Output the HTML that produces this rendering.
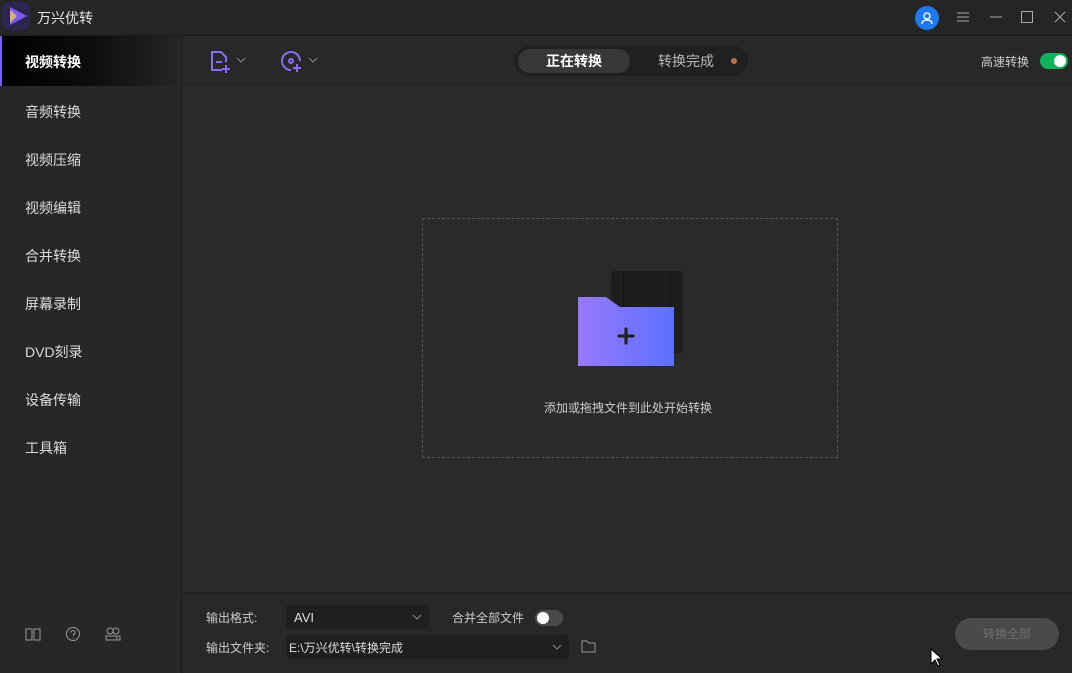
<!DOCTYPE html>
<html><head><meta charset="utf-8"><style>
*{margin:0;padding:0;box-sizing:border-box}
body{width:1072px;height:673px;background:#2a2a2a;font-family:"Liberation Sans","Noto Sans CJK SC",sans-serif;color:#ddd;position:relative;overflow:hidden;font-size:13px}
.abs{position:absolute}
#title{left:0;top:0;width:1072px;height:36px;background:#252525;border-bottom:1px solid #1c1c1c}
#side{left:0;top:36px;width:182px;height:637px;background:#272727;border-right:1px solid #1e1e1e}
.item{position:absolute;left:25px;font-size:14px;color:#dcdcdc}
#tool{left:182px;top:36px;width:890px;height:49px;border-bottom:1px solid #202020;background:#282828}
#bottom{left:182px;top:592px;width:890px;height:81px;border-top:1px solid #202020;background:#282828}
</style></head><body>
<div id="title" class="abs">
 <div class="abs" style="left:2px;top:2px;width:28px;height:28px;border-radius:6px;background:#2d2450"></div>
 <svg class="abs" style="left:8px;top:6px" width="20" height="20"><polygon points="2,1 19,10 2,19" fill="#7d5cf5"/><polygon points="2,4 9,10 2,17" fill="#d8b37a"/></svg>
 <div class="abs" style="left:37px;top:8px;font-size:14px;color:#e6e6e6">万兴优转</div>
 <div class="abs" style="left:915px;top:6px;width:24px;height:24px;border-radius:50%;background:#1f7af2"></div>
 <svg class="abs" style="left:915px;top:6px" width="24" height="24"><circle cx="12" cy="10" r="3" fill="none" stroke="#fff" stroke-width="1.3"/><path d="M7 18c0-3 2-4 5-4s5 1 5 4" fill="none" stroke="#fff" stroke-width="1.3"/></svg>
 <svg class="abs" style="left:956px;top:10px" width="14" height="14" stroke="#aaa"><path d="M1 3h12M1 7h12M1 11h12"/></svg>
 <svg class="abs" style="left:989px;top:10px" width="14" height="14" stroke="#aaa"><path d="M1 7h12"/></svg>
 <svg class="abs" style="left:1020px;top:10px" width="14" height="14" stroke="#aaa" fill="none"><rect x="1.5" y="1.5" width="11" height="11"/></svg>
 <svg class="abs" style="left:1053px;top:10px" width="14" height="14" stroke="#aaa"><path d="M2 2l10 10M12 2L2 12"/></svg>
</div>
<div id="side" class="abs">
 <div class="abs" style="left:0;top:0;width:181px;height:50px;background:linear-gradient(90deg,#000 0%,#0d0d0d 50%,#262626 100%);border-left:2px solid #7d5cf5"></div>
 <div class="item" style="top:16px;color:#fff;font-weight:bold">视频转换</div>
 <div class="item" style="top:66px">音频转换</div>
 <div class="item" style="top:114px">视频压缩</div>
 <div class="item" style="top:162px">视频编辑</div>
 <div class="item" style="top:210px">合并转换</div>
 <div class="item" style="top:258px">屏幕录制</div>
 <div class="item" style="top:306px">DVD刻录</div>
 <div class="item" style="top:354px">设备传输</div>
 <div class="item" style="top:402px">工具箱</div>
 <svg class="abs" style="left:25px;top:591px" width="16" height="14" stroke="#999" fill="none"><path d="M1 2h6v11H1zM9 2h6v11H9z"/></svg>
 <svg class="abs" style="left:65px;top:590px" width="16" height="16" stroke="#999" fill="none"><circle cx="8" cy="8" r="6.5"/><path d="M6 6.5a2 2 0 1 1 2.5 2V10M8 11.5v1"/></svg>
 <svg class="abs" style="left:105px;top:590px" width="16" height="16" stroke="#999" fill="none"><circle cx="5" cy="5" r="3"/><circle cx="11" cy="5" r="3"/><rect x="1" y="10" width="11" height="4"/><path d="M13 10h2v4h-2"/></svg>
</div>
<div id="tool" class="abs">
 <svg class="abs" style="left:28px;top:14px" width="24" height="24" fill="none" stroke="#8a6cf5" stroke-width="2"><path d="M12 20H2V2h9l5 5v5"/><path d="M6 12h6M16 15v8M12 19h8"/></svg>
 <svg class="abs" style="left:54px;top:21px" width="10" height="6" stroke="#888" fill="none"><path d="M1 1l4 4 4-4"/></svg>
 <svg class="abs" style="left:98px;top:14px" width="24" height="24" fill="none" stroke="#8a6cf5" stroke-width="2"><path d="M11 20a9 9 0 1 1 9-9"/><circle cx="11" cy="11" r="2"/><path d="M17 14v8M13 18h8"/></svg>
 <svg class="abs" style="left:126px;top:21px" width="10" height="6" stroke="#888" fill="none"><path d="M1 1l4 4 4-4"/></svg>
 <div class="abs" style="left:332px;top:10px;width:234px;height:30px;border-radius:15px;background:#202020"></div>
 <div class="abs" style="left:336px;top:13px;width:112px;height:24px;border-radius:12px;background:#383838;color:#fff;font-weight:bold;text-align:center;line-height:24px;font-size:14px">正在转换</div>
 <div class="abs" style="left:476px;top:15px;font-size:14px;color:#b8b8b8">转换完成</div>
 <div class="abs" style="left:549px;top:22px;width:6px;height:6px;border-radius:50%;background:#c0704a"></div>
 <div class="abs" style="left:799px;top:17px;font-size:12px;color:#ccc">高速转换</div>
 <div class="abs" style="left:858px;top:17px;width:28px;height:16px;border-radius:8px;background:#0fb15a"></div>
 <div class="abs" style="left:872px;top:19px;width:12px;height:12px;border-radius:50%;background:#fff"></div>
</div>
<div class="abs" style="left:422px;top:218px;width:416px;height:240px;border:1px dashed #555"></div>
<div class="abs" style="left:611px;top:271px;width:72px;height:82px;border-radius:4px;background:#1d1d1d"></div>
<div class="abs" style="left:623px;top:271px;width:1px;height:70px;background:#111"></div>
<div class="abs" style="left:670px;top:271px;width:1px;height:70px;background:#111"></div>
<svg class="abs" style="left:577px;top:297px" width="98" height="70"><defs><linearGradient id="g"><stop offset="0" stop-color="#9a78fb"/><stop offset="1" stop-color="#5a72ff"/></linearGradient></defs><path d="M1 0H29L43 10H97V69H1Z" fill="url(#g)"/><path d="M49 32v14M42 39h14" stroke="#222" stroke-width="3.2" stroke-linecap="round"/></svg>
<div class="abs" style="left:544px;top:399px;font-size:12px;color:#ccc">添加或拖拽文件到此处开始转换</div>
<div id="bottom" class="abs">
 <div class="abs" style="left:24px;top:16px;font-size:12px;color:#ccc">输出格式:</div>
 <div class="abs" style="left:104px;top:12px;width:143px;height:24px;border-radius:4px;background:#1f1f1f;color:#ddd;padding:5px 8px;font-size:13px">AVI</div>
 <svg class="abs" style="left:230px;top:21px" width="10" height="6" stroke="#888" fill="none"><path d="M1 1l4 4 4-4"/></svg>
 <div class="abs" style="left:270px;top:16px;font-size:12px;color:#ccc">合并全部文件</div>
 <div class="abs" style="left:353px;top:17px;width:28px;height:16px;border-radius:8px;background:#4a4a4a"></div>
 <div class="abs" style="left:355px;top:19px;width:12px;height:12px;border-radius:50%;background:#fff"></div>
 <div class="abs" style="left:24px;top:46px;font-size:12px;color:#ccc">输出文件夹:</div>
 <div class="abs" style="left:104px;top:42px;width:283px;height:24px;border-radius:4px;background:#1f1f1f;color:#ddd;padding:4px 3px;font-size:12px">E:\万兴优转\转换完成</div>
 <svg class="abs" style="left:370px;top:51px" width="10" height="6" stroke="#888" fill="none"><path d="M1 1l4 4 4-4"/></svg>
 <svg class="abs" style="left:399px;top:47px" width="15" height="13" stroke="#999" fill="none"><path d="M1 1h5l1.5 2H14v9H1z"/></svg>
 <div class="abs" style="left:773px;top:25px;width:104px;height:32px;border-radius:16px;background:#4a4a4a;color:#6e6e6e;text-align:center;line-height:32px;font-size:12px">转换全部</div>
</div>
<svg class="abs" style="left:930px;top:648px" width="14" height="20"><path d="M1 1v15l4-4 3 6 2-1-3-6h5z" fill="#fff" stroke="#000"/></svg>
</body></html>
